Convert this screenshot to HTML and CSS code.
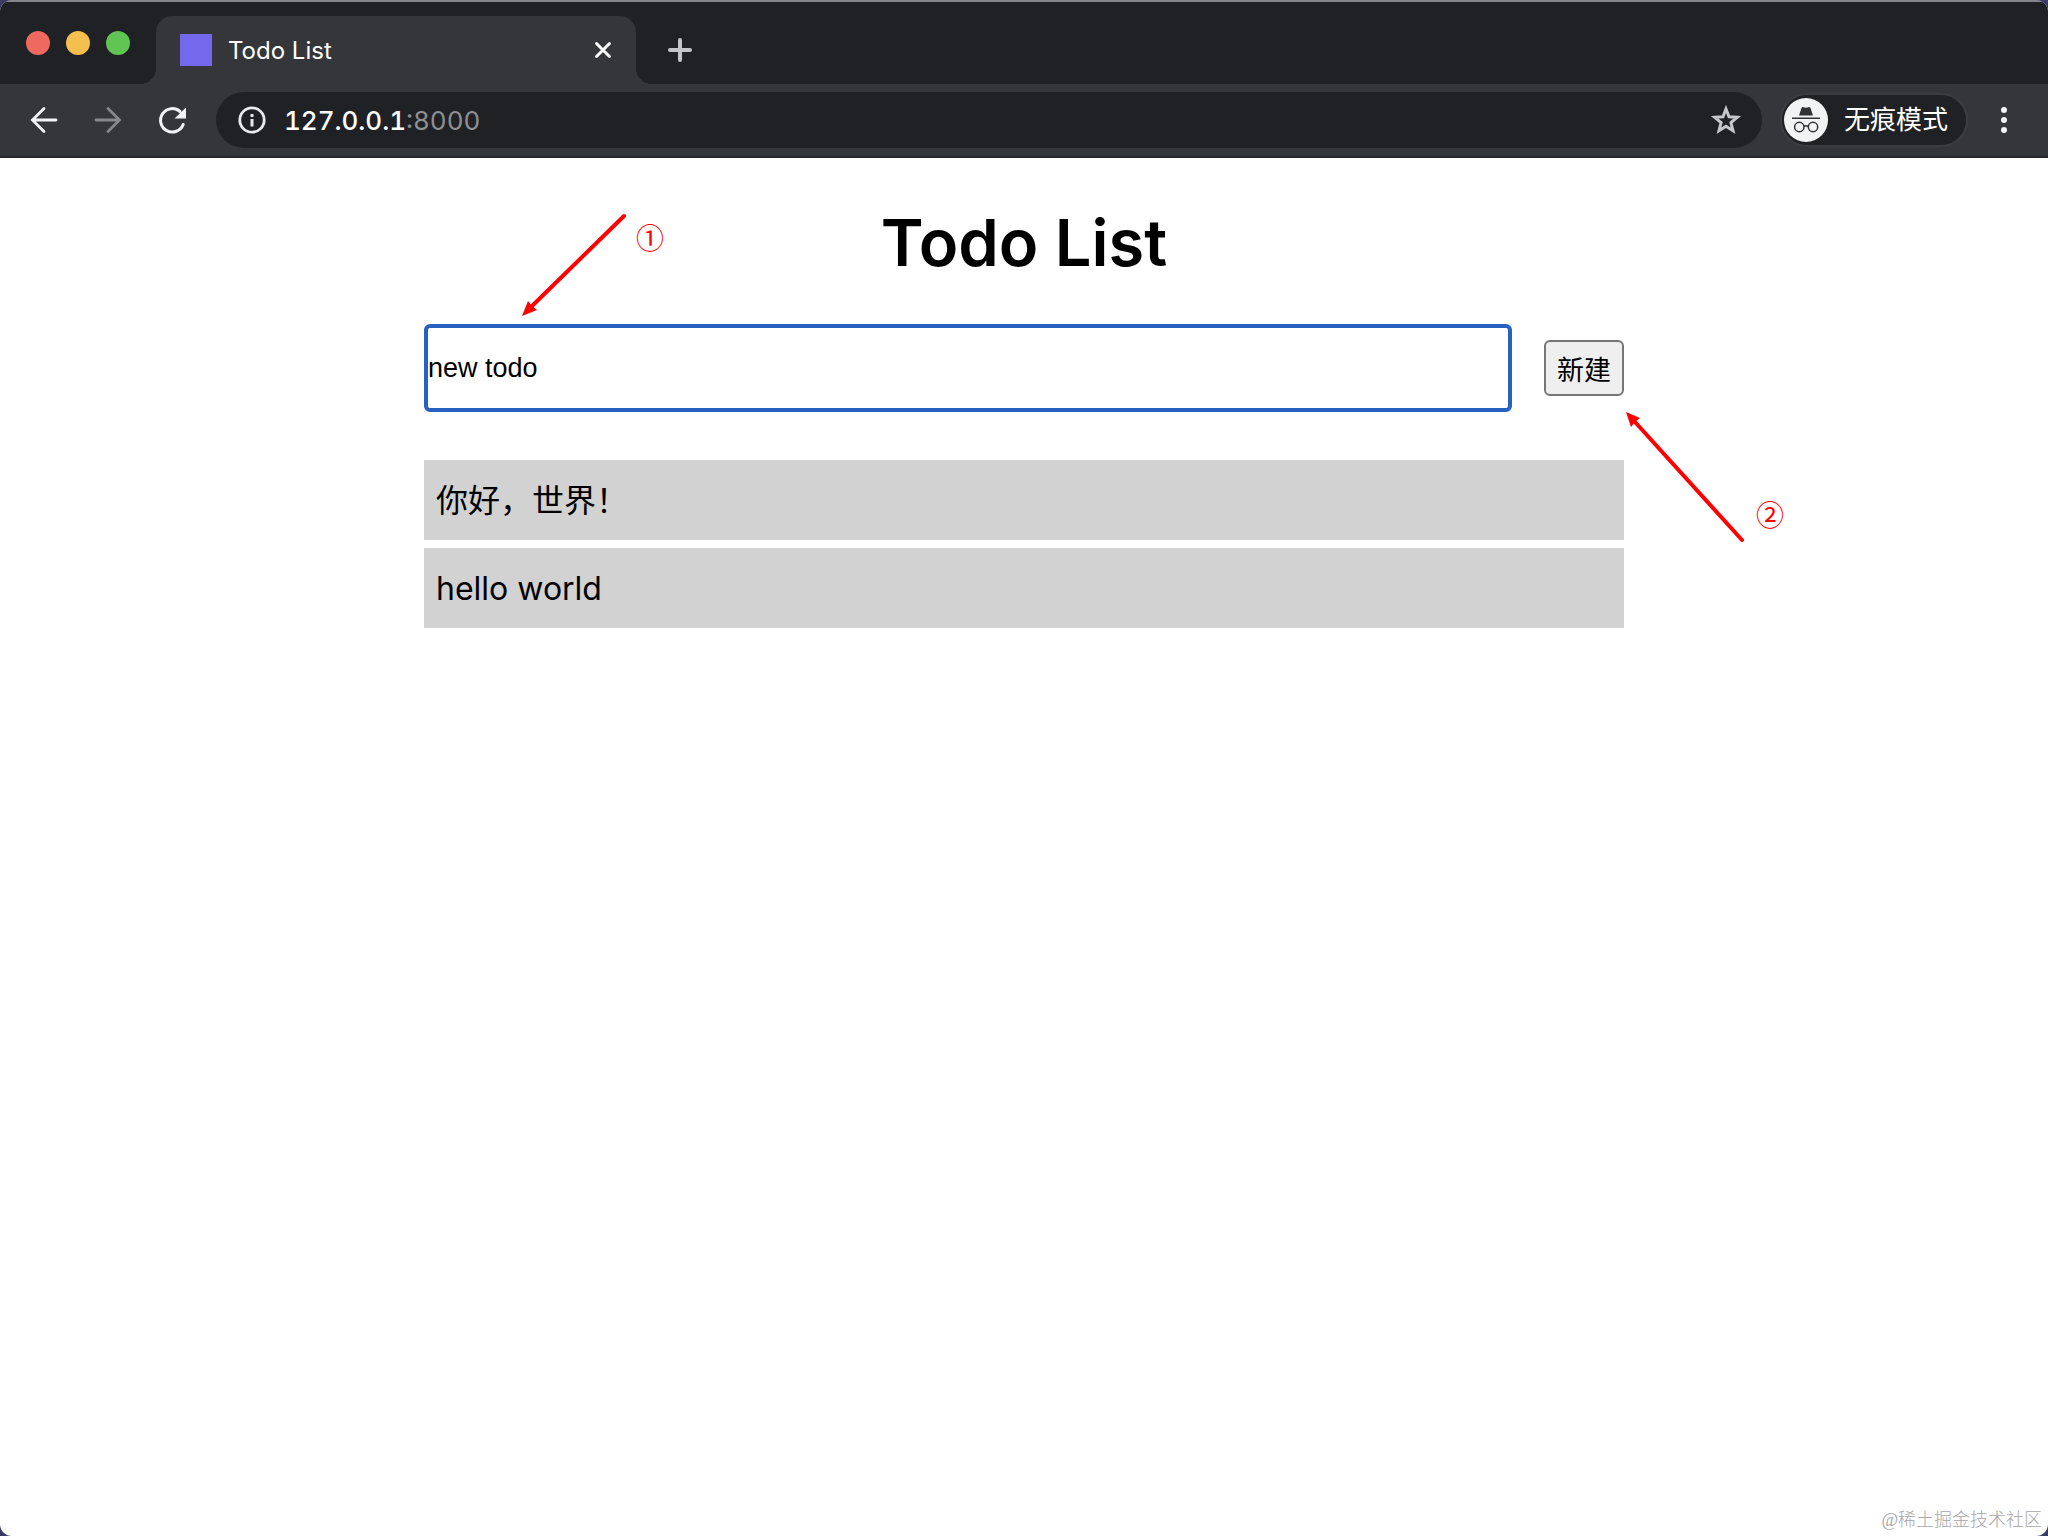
FILE: index.html
```html
<!DOCTYPE html>
<html lang="zh-CN">

<head>
    <meta charset="UTF-8">
    <meta name="viewport" content="width=device-width, initial-scale=1.0">
    <title>Todo List</title>
    <link rel="stylesheet" href="styles.css">
</head>

<body>
    <div class="window">
        <header class="browser">
            <div class="tab-strip">
                <div class="lights">
                    <span class="light red"></span>
                    <span class="light yellow"></span>
                    <span class="light green"></span>
                </div>
                <div class="tab">
                    <span class="favicon"></span>
                    <span class="tab-title">Todo List</span>
                    <button class="icon-btn" aria-label="Close tab">
                        <svg width="18" height="18" viewBox="0 0 18 18"><path d="M2.500 2.500l13 13M15.500 2.500l-13 13" stroke="#fff" stroke-width="3" stroke-linecap="round"/></svg>
                    </button>
                </div>
                <button class="icon-btn new-tab" aria-label="New tab">
                    <svg width="24" height="24" viewBox="0 0 24 24"><path d="M12 2v20M2 12h20" stroke="#c4c5c9" stroke-width="4" stroke-linecap="round"/></svg>
                </button>
            </div>
            <div class="toolbar">
                <nav class="nav">
                    <button class="icon-btn" aria-label="Back">
                        <svg width="32" height="32" viewBox="0 0 32 32"><path d="M28 16H5M16 4.500L4.500 16L16 27.500" fill="none" stroke="#f1f3f4" stroke-width="2.800" stroke-linecap="round"/></svg>
                    </button>
                    <button class="icon-btn" aria-label="Forward" disabled>
                        <svg width="32" height="32" viewBox="0 0 32 32"><path d="M4 16h23M16 4.500L27.500 16L16 27.500" fill="none" stroke="#87888b" stroke-width="2.800" stroke-linecap="round"/></svg>
                    </button>
                    <button class="icon-btn" aria-label="Reload">
                        <svg width="32" height="32" viewBox="0 0 32 32"><path d="M27.200 20.500A11.700 11.700 0 1 1 24 7.500" fill="none" stroke="#f1f3f4" stroke-width="3" stroke-linecap="round"/><path d="M30 3.500v11H18.500z" fill="#f1f3f4"/></svg>
                    </button>
                </nav>
                <div class="address">
                    <svg width="28" height="28" viewBox="0 0 28 28"><circle cx="14" cy="14" r="12.200" fill="none" stroke="#e8eaed" stroke-width="2.800"/><path d="M12.500 8h3v3h-3zM12.500 13h3v7.500h-3z" fill="#e8eaed"/></svg>
                    <div class="url" role="textbox" aria-label="Address">127.0.0.1<span class="port">:8000</span></div>
                    <button class="icon-btn" aria-label="Bookmark">
                        <svg width="32" height="32" viewBox="0 0 32 32"><path d="M16 5l3 7.800 8.300.5-6.400 5.300 2.100 8.100L16 22.200l-7 4.500 2.100-8.100-6.400-5.300 8.300-.5z" fill="none" stroke="#c6c7ca" stroke-width="3"/></svg>
                    </button>
                </div>
                <button class="incognito">
                    <svg width="44" height="44" viewBox="0 0 44 44">
                        <circle cx="22" cy="22" r="22" fill="#f1f3f4"/>
                        <path d="M15 17.500l2.500-7.500q.5-1.200 2-.8l2.500.6 2.500-.6q1.500-.4 2 .8l2.500 7.500zM8 19.500h28v1.500H8z" fill="#303236"/>
                        <g fill="none" stroke="#303236" stroke-width="1.500"><circle cx="15.300" cy="29" r="4.700"/><circle cx="29" cy="29" r="4.700"/><path d="M20 28.500q2.100-1.400 4.300 0"/></g>
                    </svg>
                    <span>无痕模式</span>
                </button>
                <button class="icon-btn menu" aria-label="Menu">
                    <svg width="8" height="28" viewBox="0 0 8 28" fill="#f1f3f4"><circle cx="4" cy="4" r="3"/><circle cx="4" cy="14" r="3"/><circle cx="4" cy="24" r="3"/></svg>
                </button>
            </div>
        </header>

        <main class="container">
            <h1>Todo List</h1>
            <form class="todo-form">
                <input type="text" name="content" value="new todo" aria-label="Todo">
                <button type="button">新建</button>
            </form>
            <ul class="todo-list">
                <li>你好，世界！</li>
                <li>hello world</li>
            </ul>

            <!-- step markers -->
            <div class="step step-input">
                <svg width="106" height="106" viewBox="0 0 106 106"><path d="M102 3L9 94" stroke="#fe0000" stroke-width="4" stroke-linecap="round"/><path d="M0 103l6-15 4 5 5 4z" fill="#fe0000"/></svg>
                <span>①</span>
            </div>
            <div class="step step-button">
                <svg width="120" height="132" viewBox="0 0 120 132"><path d="M116 128L9 10" stroke="#fe0000" stroke-width="4" stroke-linecap="round"/><path d="M0 0l14 6-5 4-4 5z" fill="#fe0000"/></svg>
                <span>②</span>
            </div>
        </main>
        <p class="watermark">@稀土掘金技术社区</p>
    </div>
</body>

</html>
```

FILE: styles.css
```css
* {
    box-sizing: border-box;
}

body {
    margin: 0;
    background: #3b3a64;
    font-family: Inter, "Noto Sans CJK SC", sans-serif;
}

.window {
    position: relative;
    min-height: 100vh;
    border-radius: 12px;
    background: #fff;
    overflow: hidden;
}

button {
    font-family: inherit;
    cursor: pointer;
}

svg {
    display: block;
    flex: none;
}

/* browser chrome */
.browser {
    background: #202124;
    border-top: 2px solid #85868a;
    color: #fff;
}

.tab-strip {
    display: flex;
    height: 82px;
    padding-top: 14px;
}

.lights {
    display: flex;
    gap: 16px;
    width: 156px;
    padding: 15px 0 0 26px;
}

.light {
    width: 24px;
    height: 24px;
    border-radius: 50%;
}

.red {
    background: #ee6a5f;
}

.yellow {
    background: #f5bf4f;
}

.green {
    background: #61c554;
}

.tab {
    position: relative;
    display: flex;
    align-items: center;
    gap: 16px;
    width: 480px;
    padding: 0 24px;
    border-radius: 16px 16px 0 0;
    background: #35363a;
}

/* curved feet of the tab */
.tab::before,
.tab::after {
    content: "";
    position: absolute;
    bottom: 0;
    width: 16px;
    height: 16px;
}

.tab::before {
    right: 100%;
    background: radial-gradient(circle at 0 0, #202124 16px, #35363a 16px);
}

.tab::after {
    left: 100%;
    background: radial-gradient(circle at 100% 0, #202124 16px, #35363a 16px);
}

.favicon {
    width: 32px;
    height: 32px;
    background: #7668ed;
}

.tab-title {
    flex: 1;
    font-size: 24px;
}

.icon-btn {
    padding: 0;
    border: none;
    background: none;
}

.new-tab {
    margin-left: 32px;
}

.toolbar {
    display: flex;
    align-items: center;
    height: 74px;
    padding: 0 40px 0 28px;
    border-bottom: 2px solid #28292c;
    background: #35363a;
}

.nav {
    display: flex;
    gap: 32px;
    margin-right: 28px;
}

.address {
    display: flex;
    flex: 1;
    align-items: center;
    height: 56px;
    padding: 0 20px 0 22px;
    border-radius: 28px;
    background: #202124;
}

.url {
    flex: 1;
    margin-left: 18px;
    font-size: 26px;
    font-weight: 500;
    font-variant-numeric: tabular-nums;
}

.port {
    color: #8f9093;
    font-weight: 400;
}

.incognito {
    display: flex;
    align-items: center;
    gap: 16px;
    height: 54px;
    margin: 0 32px 0 18px;
    padding: 0 18px 0 2px;
    border: 2px solid #3c3d41;
    border-radius: 28px;
    background: #202124;
    color: #fff;
    font-size: 26px;
    line-height: 44px;
}

/* todo page */
.container {
    position: relative;
    max-width: 1200px;
    margin: 0 auto;
    padding-top: 40px;
}

h1 {
    margin: 0 0 36px;
    font-size: 65px;
    font-weight: 600;
    line-height: 90px;
    text-align: center;
}

.todo-form {
    display: flex;
    align-items: center;
    gap: 32px;
}

.todo-form input {
    flex: 1;
    height: 88px;
    padding: 0;
    border: 4px solid #2762c0;
    border-radius: 6px;
    outline: none;
    font-family: "Liberation Sans", sans-serif;
    font-size: 27px;
}

.todo-form button {
    width: 80px;
    height: 56px;
    padding: 0;
    border: 2px solid #767676;
    border-radius: 6px;
    background: #efefef;
    color: #000;
    font-size: 27px;
}

.todo-list {
    display: flex;
    flex-direction: column;
    gap: 8px;
    margin: 48px 0 0;
    padding: 0;
    list-style: none;
}

.todo-list li {
    padding: 2px 12px 0;
    background: #d2d2d2;
    font-size: 32px;
    line-height: 78px;
}

.step {
    position: absolute;
    display: flex;
    color: #fe0000;
    font-family: "Noto Sans CJK SC", sans-serif;
    font-size: 28px;
    line-height: 32px;
}

.step-input {
    top: 55px;
    left: 98px;
    gap: 8px;
}

.step-input span {
    margin-top: 8px;
}

.step-button {
    top: 254px;
    left: 1202px;
    align-items: flex-end;
    gap: 10px;
}

.step-button span {
    margin-bottom: 14px;
}

.watermark {
    position: absolute;
    right: 6px;
    bottom: 4px;
    margin: 0;
    color: #a6a6a6;
    font-family: "Liberation Serif", "Noto Sans CJK SC", serif;
    font-size: 18px;
    font-weight: 300;
    line-height: 24px;
}
```
